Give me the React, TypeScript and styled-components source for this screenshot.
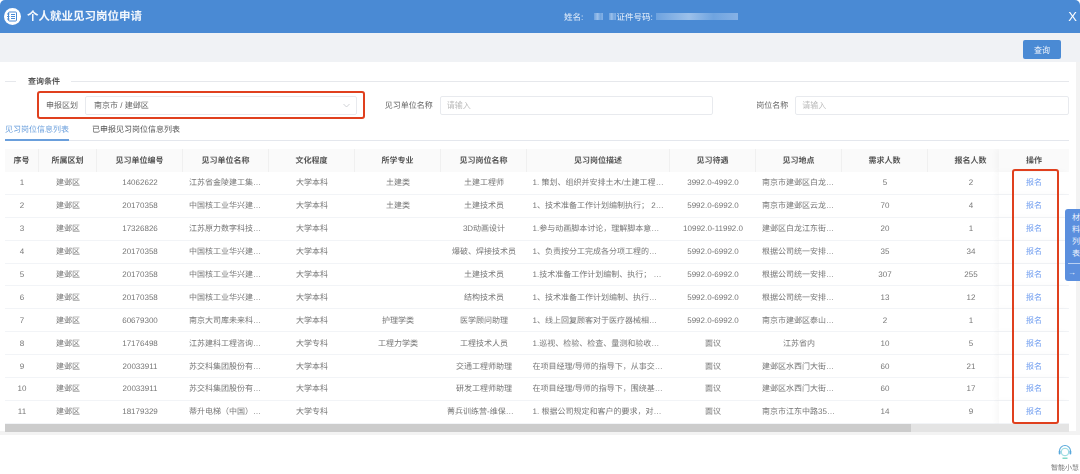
import React from "react";
import styled, { createGlobalStyle } from "styled-components";

const GlobalStyle = createGlobalStyle`
  html, body {
    margin: 0;
    padding: 0;
    background: #fff;
    font-family: "Liberation Sans", "Noto Sans CJK SC", sans-serif;
    text-rendering: geometricPrecision;
    overflow: hidden;
  }
  * { box-sizing: border-box; }
`;

const Page = styled.div`
  width: 1080px;
  height: 474px;
  position: relative;
  display: flex;
  flex-direction: column;
  overflow: hidden;
  filter: blur(0.4px);
`;

const Header = styled.header`
  height: 33px;
  flex: none;
  display: flex;
  align-items: center;
  padding: 0 3px 0 4px;
  background: #4a8ad4;
  border-radius: 5px 5px 0 0;
  color: #fff;
`;

const HeaderIcon = styled.svg`
  width: 17px;
  height: 17px;
  flex: none;
`;

const Title = styled.h1`
  width: 537px;
  margin: 0 0 0 6px;
  font-size: 11.5px;
  line-height: 18px;
  font-weight: 700;
  color: #f4f8fd;
`;

const Person = styled.div`
  display: flex;
  align-items: center;
  font-size: 8.5px;
  color: #e4eefa;
`;

const Masked = styled.span<{ $width: number; $left: number }>`
  display: inline-block;
  width: ${p => p.$width}px;
  height: 7px;
  margin-left: ${p => p.$left}px;
  background: linear-gradient(90deg, #6da2df, #9cc0ea 40%, #6fa4e0 70%, #86b1e5);
`;

const Close = styled.span`
  margin-left: auto;
  font-size: 13px;
  line-height: 1;
  color: #fff;
`;

const Toolbar = styled.div`
  height: 29px;
  flex: none;
  display: flex;
  align-items: center;
  justify-content: flex-end;
  padding: 4px 19px 0 0;
  background: #f0f2f5;
`;

const QueryButton = styled.button`
  width: 38px;
  height: 19px;
  padding: 0;
  border: 0;
  border-radius: 2px;
  background: #4a8ad4;
  color: #f0f5fc;
  font: inherit;
  font-size: 8px;
`;

const Main = styled.main`
  flex: none;
  height: 373px;
  padding: 13px 7px 0 5px;
  border-right: 4px solid #f3f3f3;
  border-bottom: 4px solid #f3f3f3;
`;

const Legend = styled.div`
  height: 12px;
  display: flex;
  align-items: center;
  gap: 12px;
  font-size: 8px;
  font-weight: 700;
  color: #555;

  &::before,
  &::after {
    content: "";
    height: 1px;
    background: #e6e8ec;
  }
  &::before {
    width: 11px;
  }
  &::after {
    flex: 1;
    margin-left: -1px;
  }
`;

const Filters = styled.div`
  display: flex;
  align-items: center;
  margin: 4px 0 0 32px;
`;

const Highlight = styled.div`
  width: 328px;
  height: 28px;
  display: flex;
  align-items: center;
  gap: 7px;
  padding: 0 6px 0 7px;
  border: 2px solid #e0401e;
  border-radius: 3px;
`;

const FieldLabel = styled.label`
  flex: none;
  font-size: 8px;
  color: #666;
`;

const SelectBox = styled.div`
  flex: 1;
  height: 19px;
  display: flex;
  align-items: center;
  justify-content: space-between;
  padding: 0 5px 0 8px;
  border: 1px solid #e8eaee;
  border-radius: 2px;
  font-size: 8px;
  color: #666;
`;

const Field = styled.div<{ $left: number }>`
  display: flex;
  align-items: center;
  gap: 7px;
  margin-left: ${p => p.$left}px;
`;

const TextInput = styled.input`
  width: 274px;
  height: 19px;
  padding: 0 6px;
  border: 1px solid #e8eaee;
  border-radius: 2px;
  font: inherit;
  font-size: 8px;
  outline: 0;

  &::placeholder {
    color: #bbb;
  }
`;

const Tabs = styled.div`
  height: 20px;
  margin-top: 2px;
  display: flex;
  gap: 23px;
  border-bottom: 1px solid #e4e7ed;
`;

const Tab = styled.div<{ $active?: boolean }>`
  height: 20px;
  line-height: 18px;
  font-size: 8px;
  color: ${p => (p.$active ? "#6a9fdc" : "#555")};
  border-bottom: 2px solid ${p => (p.$active ? "#6a9fdc" : "transparent")};
`;

const TableArea = styled.div`
  position: relative;
  margin-top: 8px;
`;

const Scroller = styled.div`
  overflow: hidden;
`;

const ScrollTrack = styled.div`
  height: 8px;
  background: #e4e4e4;
`;

const ScrollThumb = styled.div`
  width: 906px;
  height: 100%;
  background: #cccccc;
`;

const Table = styled.table`
  width: 1250px;
  table-layout: fixed;
  border-collapse: separate;
  border-spacing: 0;
  font-size: 8px;
`;

const HeadCell = styled.th<{ $fixed?: boolean }>`
  height: 23px;
  padding: 0;
  background: #fafafa;
  border-right: 1px solid #f0f0f0;
  font-weight: 700;
  color: #555;
  text-align: center;
  ${p =>
    p.$fixed &&
    `
    position: sticky;
    right: 0;
    border-right: 0;
    box-shadow: -3px 0 6px rgba(0, 0, 0, 0.03);
  `}
`;

const Cell = styled.td<{ $fixed?: boolean; $wide?: boolean }>`
  height: 22.9px;
  padding: 0 ${p => (p.$wide ? "5.5px" : "6px")};
  background: #fff;
  border-bottom: 1px solid #f2f4f7;
  color: #777;
  text-align: center;
  white-space: nowrap;
  overflow: hidden;
  text-overflow: ellipsis;
  ${p =>
    p.$fixed &&
    `
    position: sticky;
    right: 0;
    overflow: visible;
    box-shadow: -3px 0 6px rgba(0, 0, 0, 0.03);
  `}
`;

const ApplyLink = styled.a`
  color: #729ff0;
  text-decoration: none;
`;

const OperationMark = styled.div`
  position: absolute;
  top: 20px;
  left: 1007px;
  width: 47px;
  height: 255px;
  border: 2px solid #e0401e;
  border-radius: 3px;
  pointer-events: none;
`;

const SideTab = styled.aside`
  position: absolute;
  top: 209px;
  right: 0;
  width: 15px;
  height: 72px;
  padding: 3px 0 0 7px;
  background: #5b8fde;
  border-radius: 3px 0 0 3px;
  color: #eef4fd;
  font-size: 8px;
  line-height: 12px;
  overflow: hidden;
`;

const SideArrow = styled.div`
  margin: 3px 0 0 -4px;
  padding: 3px 0 0 0;
  border-top: 1px solid #b9d0f2;
  font-size: 8px;
  line-height: 12px;
`;

const Footer = styled.footer`
  flex: 1;
  display: flex;
  flex-direction: column;
  align-items: flex-end;
  padding: 9px 1px 0 0;
  background: #fff;
`;

const Helper = styled.div`
  display: flex;
  flex-direction: column;
  align-items: center;
  gap: 4px;
  font-size: 7px;
  line-height: 9px;
  color: #777;
`;

const DESCRIPTION_COLUMN = 7;

const columns = [34, 58, 86, 86, 86, 86, 86, 143, 86, 86, 86, 86];
const heads = [
  "序号",
  "所属区划",
  "见习单位编号",
  "见习单位名称",
  "文化程度",
  "所学专业",
  "见习岗位名称",
  "见习岗位描述",
  "见习待遇",
  "见习地点",
  "需求人数",
  "报名人数",
];

const rows = [
  ["1", "建邺区", "14062622", "江苏省金陵建工集团有限公司", "大学本科", "土建类", "土建工程师", "1. 策划、组织并安排土木/土建工程师工作", "3992.0-4992.0", "南京市建邺区白龙江东街", "5", "2"],
  ["2", "建邺区", "20170358", "中国核工业华兴建设有限公司", "大学本科", "土建类", "土建技术员", "1、技术准备工作计划编制执行； 2、施工", "5992.0-6992.0", "南京市建邺区云龙山路", "70", "4"],
  ["3", "建邺区", "17326826", "江苏原力数字科技股份有限公司", "大学本科", "", "3D动画设计", "1.参与动画脚本讨论，理解脚本意图和要求", "10992.0-11992.0", "建邺区白龙江东街一号", "20", "1"],
  ["4", "建邺区", "20170358", "中国核工业华兴建设有限公司", "大学本科", "", "爆破、焊接技术员", "1、负责按分工完成各分项工程的施工技术", "5992.0-6992.0", "根据公司统一安排项目", "35", "34"],
  ["5", "建邺区", "20170358", "中国核工业华兴建设有限公司", "大学本科", "", "土建技术员", "1.技术准备工作计划编制、执行； 2、施工", "5992.0-6992.0", "根据公司统一安排项目", "307", "255"],
  ["6", "建邺区", "20170358", "中国核工业华兴建设有限公司", "大学本科", "", "结构技术员", "1、技术准备工作计划编制、执行；施工", "5992.0-6992.0", "根据公司统一安排项目", "13", "12"],
  ["7", "建邺区", "60679300", "南京大司库未来科技有限公司", "大学本科", "护理学类", "医学顾问助理", "1、线上回复顾客对于医疗器械相关问题", "5992.0-6992.0", "南京市建邺区泰山路街道", "2", "1"],
  ["8", "建邺区", "17176498", "江苏建科工程咨询有限公司", "大学专科", "工程力学类", "工程技术人员", "1.巡视、检验、检查、量测和验收工作内容", "面议", "江苏省内", "10", "5"],
  ["9", "建邺区", "20033911", "苏交科集团股份有限公司", "大学本科", "", "交通工程师助理", "在项目经理/导师的指导下，从事交通工程", "面议", "建邺区水西门大街223号", "60", "21"],
  ["10", "建邺区", "20033911", "苏交科集团股份有限公司", "大学本科", "", "研发工程师助理", "在项目经理/导师的指导下，围绕基础研究", "面议", "建邺区水西门大街223号", "60", "17"],
  ["11", "建邺区", "18179329", "蒂升电梯（中国）有限公司", "大学专科", "", "菁兵训练营-维保工程师", "1. 根据公司规定和客户的要求，对电梯进行", "面议", "南京市江东中路359号", "14", "9"],
];

export default function App() {
  return (
    <Page>
      <GlobalStyle />
      <Header>
        <HeaderIcon viewBox="0 0 17 17">
          <circle cx="8.5" cy="8.5" r="8.5" fill="#fff" />
          <rect x="4.5" y="4" width="8" height="9" rx="1" fill="none" stroke="#4a8ad4" strokeWidth="1" />
          <path d="M3 6h2.5M3 8.5h2.5M3 11h2.5M7 6.5h4M7 8.5h4M7 10.5h4" stroke="#4a8ad4" strokeWidth="1" />
        </HeaderIcon>
        <Title>个人就业见习岗位申请</Title>
        <Person>
          姓名:
          <Masked $width={9} $left={11} />
          <Masked $width={7} $left={6} />
          证件号码:
          <Masked $width={82} $left={3} />
        </Person>
        <Close>X</Close>
      </Header>
      <Toolbar>
        <QueryButton>查询</QueryButton>
      </Toolbar>
      <Main>
        <Legend>查询条件</Legend>
        <Filters>
          <Highlight>
            <FieldLabel>申报区划</FieldLabel>
            <SelectBox>
              南京市 / 建邺区
              <svg width="9" height="9" viewBox="0 0 9 9">
                <path d="M1.5 3l3 3 3-3" fill="none" stroke="#c4c7cc" strokeWidth="0.8" />
              </svg>
            </SelectBox>
          </Highlight>
          <Field $left={20}>
            <FieldLabel>见习单位名称</FieldLabel>
            <TextInput placeholder="请输入" />
          </Field>
          <Field $left={43}>
            <FieldLabel>岗位名称</FieldLabel>
            <TextInput placeholder="请输入" />
          </Field>
        </Filters>
        <Tabs>
          <Tab $active>见习岗位信息列表</Tab>
          <Tab>已申报见习岗位信息列表</Tab>
        </Tabs>
        <TableArea>
          <Scroller>
            <Table>
              <colgroup>
                {columns.map((width, i) => (
                  <col key={i} width={width} />
                ))}
                <col />
                <col width={70} />
              </colgroup>
              <thead>
                <tr>
                  {heads.map(head => (
                    <HeadCell key={head}>{head}</HeadCell>
                  ))}
                  <HeadCell />
                  <HeadCell $fixed>操作</HeadCell>
                </tr>
              </thead>
              <tbody>
                {rows.map(row => (
                  <tr key={row[0]}>
                    {row.map((value, i) => (
                      <Cell key={i} $wide={i === DESCRIPTION_COLUMN}>
                        {value}
                      </Cell>
                    ))}
                    <Cell />
                    <Cell $fixed>
                      <ApplyLink href="#">报名</ApplyLink>
                    </Cell>
                  </tr>
                ))}
              </tbody>
            </Table>
          </Scroller>
          <ScrollTrack>
            <ScrollThumb />
          </ScrollTrack>
          <OperationMark />
        </TableArea>
      </Main>
      <Footer>
        <Helper>
          <svg width="16" height="16" viewBox="0 0 16 16" fill="none">
            <path d="M2.5 8V7a5.5 5.5 0 0 1 11 0v1" stroke="#5aa9dc" strokeWidth="1.1" />
            <circle cx="8" cy="8" r="3.8" stroke="#8fd8de" strokeWidth="1" />
            <rect x="1.7" y="6.5" width="1.8" height="4" rx="0.9" fill="#5aa9dc" />
            <rect x="12.5" y="6.5" width="1.8" height="4" rx="0.9" fill="#5aa9dc" />
            <path d="M5.5 14.2h5" stroke="#62d0b8" strokeWidth="1.2" />
          </svg>
          智能小慧
        </Helper>
      </Footer>
      <SideTab>
        材料列表
        <SideArrow>→</SideArrow>
      </SideTab>
    </Page>
  );
}
